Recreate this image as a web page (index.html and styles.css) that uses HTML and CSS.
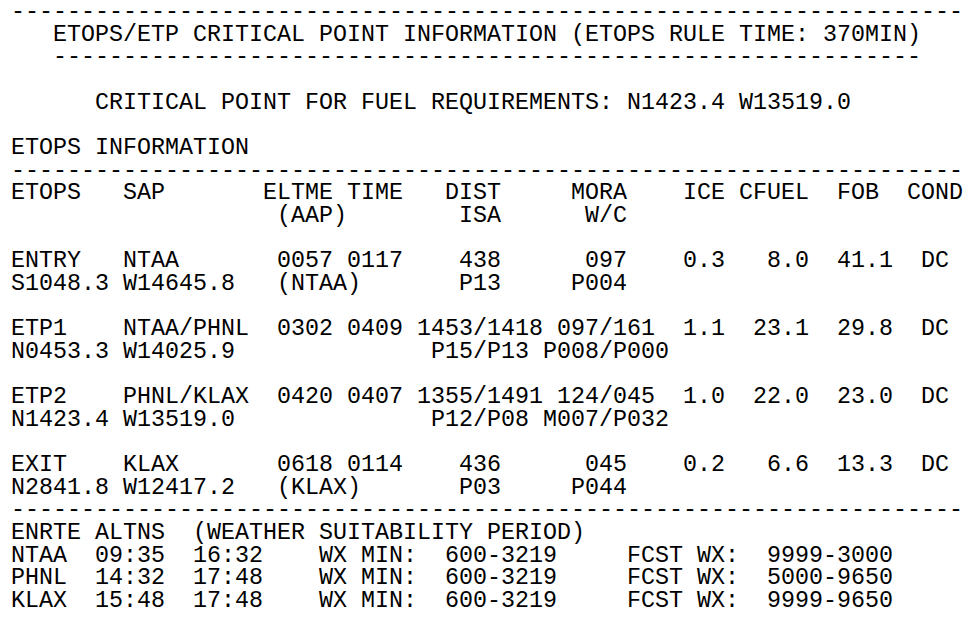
FILE: index.html
```html
<!DOCTYPE html>
<html lang="en">
<head>
<meta charset="utf-8">
<title>ETOPS/ETP Critical Point Information</title>
<link rel="stylesheet" href="styles.css">
</head>
<body>
<pre class="report">--------------------------------------------------------------------
   ETOPS/ETP CRITICAL POINT INFORMATION (ETOPS RULE TIME: 370MIN)
   --------------------------------------------------------------

      CRITICAL POINT FOR FUEL REQUIREMENTS: N1423.4 W13519.0

ETOPS INFORMATION
--------------------------------------------------------------------
ETOPS   SAP       ELTME TIME   DIST     MORA    ICE CFUEL  FOB  COND
                   (AAP)        ISA      W/C

ENTRY   NTAA       0057 0117    438      097    0.3   8.0  41.1  DC
S1048.3 W14645.8   (NTAA)       P13     P004

ETP1    NTAA/PHNL  0302 0409 1453/1418 097/161  1.1  23.1  29.8  DC
N0453.3 W14025.9              P15/P13 P008/P000

ETP2    PHNL/KLAX  0420 0407 1355/1491 124/045  1.0  22.0  23.0  DC
N1423.4 W13519.0              P12/P08 M007/P032

EXIT    KLAX       0618 0114    436      045    0.2   6.6  13.3  DC
N2841.8 W12417.2   (KLAX)       P03     P044
--------------------------------------------------------------------
ENRTE ALTNS  (WEATHER SUITABILITY PERIOD)
NTAA  09:35  16:32    WX MIN:  600-3219     FCST WX:  9999-3000
PHNL  14:32  17:48    WX MIN:  600-3219     FCST WX:  5000-9650
KLAX  15:48  17:48    WX MIN:  600-3219     FCST WX:  9999-9650</pre>
</body>
</html>
```

FILE: styles.css
```css
html, body {
  margin: 0;
  padding: 0;
  background: #ffffff;
}

.report {
  margin: 0;
  padding: 1px 0 0 11px;
  font-family: "Liberation Mono", "Courier New", monospace;
  font-size: 23.33px;
  line-height: 22.66px;
  color: #000000;
  white-space: pre;
}
```
